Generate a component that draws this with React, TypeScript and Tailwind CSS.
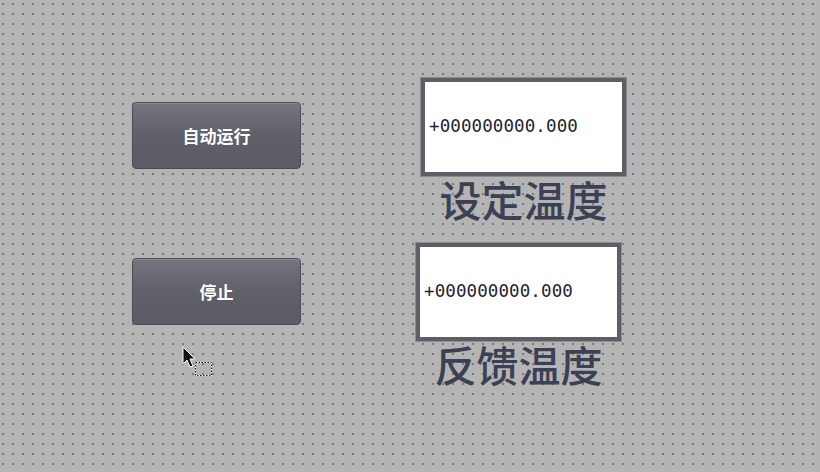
import React from "react";

function ValueBox({ value, label, offset }: { value: string; label: string; offset: string }) {
  return (
    <div className={`flex flex-col items-center ${offset}`}>
      <div className="flex h-[98px] w-[205px] items-center border-4 border-[#5d5e66] bg-white px-1 shadow-[0_0_0_1px_#8a8b92]">
        <span className="font-['DejaVu_Sans_Mono',monospace] text-[17.5px] font-medium leading-none tracking-[0.1px] text-[#24242e]">
          {value}
        </span>
      </div>
      <div className="mt-[1px] font-['Noto_Sans_CJK_SC',sans-serif] text-[42px] font-medium leading-[44px] tracking-[0px] text-[#3b4053]">
        {label}
      </div>
    </div>
  );
}

function PanelButton({ text }: { text: string }) {
  return (
    <button className="flex h-[67px] w-[169px] items-center justify-center rounded-[4px] border border-[#4a4b53] bg-gradient-to-b from-[#74757e] via-[#5f6069] to-[#5a5b64] font-['Noto_Sans_CJK_SC',sans-serif] text-[17px] font-bold text-white shadow-[inset_0_1px_0_#8c8d95]">
      {text}
    </button>
  );
}

export default function App() {
  return (
    <div className="relative h-[472px] w-[820px] overflow-hidden bg-[#b4b4b5] bg-[radial-gradient(circle,#7c7c80_1.1px,transparent_1.6px)] bg-[length:10px_10px] bg-[position:-2px_-1px] pt-[78px]">
      <div className="flex items-start">
        <div className="ml-[132px] mt-[24px]">
          <PanelButton text="自动运行" />
        </div>
        <ValueBox value="+000000000.000" label="设定温度" offset="ml-[120px]" />
      </div>
      <div className="mt-[22px] flex items-start">
        <div className="ml-[132px] mt-[15px]">
          <PanelButton text="停止" />
        </div>
        <ValueBox value="+000000000.000" label="反馈温度" offset="ml-[115px]" />
      </div>

      {/* mouse pointer with drag box */}
      <svg className="absolute left-[182px] top-[346px]" width="34" height="32" viewBox="0 0 34 32">
        <path d="M1 1 L1 18 L5 14 L8 21 L11 20 L8 13 L13 13 Z" fill="#111" stroke="#fff" strokeWidth="1" />
        <rect x="13.5" y="16.5" width="16" height="13" fill="none" stroke="#fff" strokeWidth="1" />
        <rect x="13.5" y="16.5" width="16" height="13" fill="none" stroke="#111" strokeWidth="1" strokeDasharray="1.5 1.5" />
      </svg>
    </div>
  );
}
